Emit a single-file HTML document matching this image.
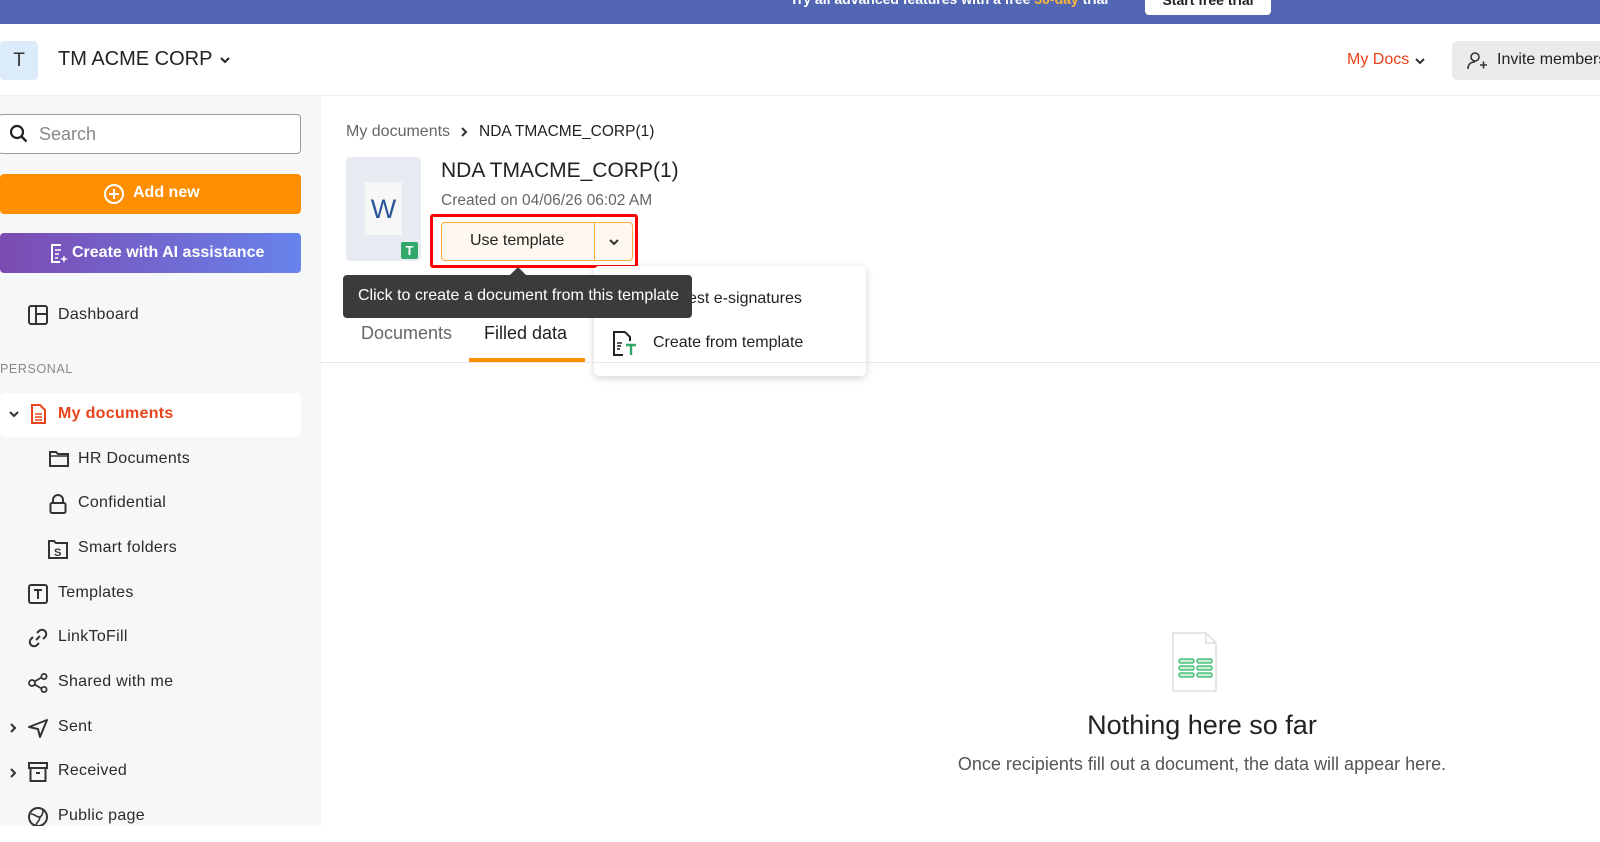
<!DOCTYPE html>
<html><head><meta charset="utf-8"><style>
*{box-sizing:border-box;margin:0;padding:0}
body{width:1600px;height:842px;overflow:hidden;background:#fff;font-family:"Liberation Sans",sans-serif;color:#222;position:relative;white-space:nowrap}
.a{position:absolute}
.banner{left:0;top:0;width:1600px;height:24px;background:#5266b4}
.side{left:0;top:96px;width:321px;height:730px;background:#f6f7f9}
.nav{position:absolute;left:58px;font-size:16px;color:#2a2a2a;letter-spacing:.3px}
svg{overflow:visible}
</style></head><body>
<div class="a banner"></div>
<div class="a" style="left:790px;top:-9px;color:#fff;font-weight:bold;font-size:14px">Try all advanced features with a free <span style="color:#f7b733">30-day</span> trial</div>
<div class="a" style="left:1145px;top:-6px;width:126px;height:21px;background:#fff;border-radius:4px;font-size:14px;font-weight:bold;text-align:center;line-height:12px;color:#222">Start free trial</div>
<!-- header -->
<div class="a" style="left:0;top:41px;width:38px;height:39px;background:#dcebf9;border-radius:4px;font-size:19px;line-height:39px;text-align:center;color:#333">T</div>
<div class="a" style="left:58px;top:48px;font-size:20px;color:#222">TM ACME CORP</div>
<svg class="a" style="left:219px;top:56px" width="12" height="8"><path d="M2 2l4 4 4-4" stroke="#222" stroke-width="2" fill="none"/></svg>
<div class="a" style="left:1347px;top:51px;font-size:16px;color:#e8431a">My Docs</div>
<svg class="a" style="left:1414px;top:57px" width="12" height="8"><path d="M2 2l4 4 4-4" stroke="#333" stroke-width="2" fill="none"/></svg>
<div class="a" style="left:1452px;top:41px;width:160px;height:39px;background:#ebebeb;border-radius:5px"></div>
<svg class="a" style="left:1466px;top:50px" width="22" height="22"><circle cx="9" cy="7" r="4" stroke="#333" stroke-width="1.6" fill="none"/><path d="M2 19c0-5 3-7 7-7M14 15h7M17.5 11.5v7" stroke="#333" stroke-width="1.6" fill="none"/></svg>
<div class="a" style="left:1497px;top:51px;font-size:16px;color:#222">Invite members</div>
<div class="a" style="left:0;top:95px;width:1600px;height:1px;background:#eceef1"></div>
<!-- sidebar -->
<div class="a side"></div>
<div class="a" style="left:-2px;top:114px;width:303px;height:40px;border:1px solid #9a9a9a;border-radius:4px;background:#fff"></div>
<svg class="a" style="left:9px;top:124px" width="20" height="20"><circle cx="8" cy="8" r="6" stroke="#222" stroke-width="2.2" fill="none"/><path d="M12.5 12.5l5 5" stroke="#222" stroke-width="2.4"/></svg>
<div class="a" style="left:39px;top:124px;font-size:18px;color:#888">Search</div>
<div class="a" style="left:0;top:174px;width:301px;height:40px;background:#ff8f00;border-radius:4px"></div>
<svg class="a" style="left:103px;top:183px" width="22" height="22"><circle cx="11" cy="11" r="9" stroke="#fff" stroke-width="2" fill="none"/><path d="M11 6v10M6 11h10" stroke="#fff" stroke-width="2"/></svg>
<div class="a" style="left:133px;top:184px;font-size:16px;color:#fff;font-weight:bold">Add new</div>
<div class="a" style="left:0;top:233px;width:301px;height:40px;border-radius:4px;background:linear-gradient(90deg,#7c4bb1,#6883ec)"></div>
<svg class="a" style="left:47px;top:242px" width="22" height="22"><path d="M14 3H5v17h8" stroke="#fff" stroke-width="2" fill="none"/><path d="M8 8h6M8 12h4M8 16h3" stroke="#fff" stroke-width="1.6"/><path d="M17 13l1 3 3 1-3 1-1 3-1-3-3-1 3-1z" fill="#fff"/></svg>
<div class="a" style="left:72px;top:244px;font-size:16px;color:#fff;font-weight:bold">Create with AI assistance</div>

<svg class="a" style="left:28px;top:305px" width="20" height="20"><rect x="1" y="1" width="18" height="18" rx="2" stroke="#333" stroke-width="2" fill="none"/><path d="M8 1v18M8 9h11" stroke="#333" stroke-width="2"/></svg>
<div class="nav" style="top:306px">Dashboard</div>
<div class="a" style="left:0;top:362px;font-size:12.5px;color:#888;letter-spacing:.6px">PERSONAL</div>
<div class="a" style="left:0;top:393px;width:301px;height:44px;background:#fff;border-radius:5px"></div>
<svg class="a" style="left:8px;top:410px" width="12" height="8"><path d="M2 2l4 4 4-4" stroke="#333" stroke-width="2" fill="none"/></svg>
<svg class="a" style="left:30px;top:404px" width="16" height="20"><path d="M2 1h8l5 5v13H2z" stroke="#e8431a" stroke-width="2" fill="none"/><path d="M5 10h7M5 13h7M5 16h7" stroke="#e8431a" stroke-width="1.4"/></svg>
<div class="nav" style="top:405px;color:#e8431a;font-weight:bold">My documents</div>
<svg class="a" style="left:48px;top:450px" width="22" height="18"><path d="M2 2h6l2 2h10v12H2z" stroke="#333" stroke-width="2" fill="none"/><path d="M2 6h18" stroke="#333" stroke-width="1.5"/></svg>
<div class="nav" style="left:78px;top:450px">HR Documents</div>
<svg class="a" style="left:49px;top:494px" width="18" height="20"><path d="M4 9V6a5 5 0 0110 0v3" stroke="#333" stroke-width="2" fill="none"/><rect x="1.5" y="9" width="15" height="10" rx="1.5" stroke="#333" stroke-width="2" fill="none"/></svg>
<div class="nav" style="left:78px;top:494px">Confidential</div>
<svg class="a" style="left:48px;top:539px" width="20" height="20"><path d="M1 2h5l2 2h11v15H1z" stroke="#333" stroke-width="2" fill="none"/><text x="6" y="17" font-size="11" font-weight="bold" fill="#333" font-family="Liberation Sans">S</text></svg>
<div class="nav" style="left:78px;top:539px">Smart folders</div>
<svg class="a" style="left:28px;top:584px" width="20" height="20"><rect x="1" y="1" width="18" height="18" rx="2" stroke="#333" stroke-width="2" fill="none"/><path d="M6 6h8M10 6v9" stroke="#333" stroke-width="2"/></svg>
<div class="nav" style="top:584px">Templates</div>
<svg class="a" style="left:28px;top:628px" width="20" height="20"><path d="M8 12l4-4M9 5l2-2a4 4 0 016 6l-2 2M11 15l-2 2a4 4 0 01-6-6l2-2" stroke="#333" stroke-width="2" fill="none"/></svg>
<div class="nav" style="top:628px">LinkToFill</div>
<svg class="a" style="left:28px;top:673px" width="20" height="20"><circle cx="4" cy="10" r="3" stroke="#333" stroke-width="1.8" fill="none"/><circle cx="16" cy="3.5" r="2.6" stroke="#333" stroke-width="1.8" fill="none"/><circle cx="16" cy="16.5" r="2.6" stroke="#333" stroke-width="1.8" fill="none"/><path d="M6.5 8.5l7-4M6.5 11.5l7 4" stroke="#333" stroke-width="1.8"/></svg>
<div class="nav" style="top:673px">Shared with me</div>
<svg class="a" style="left:9px;top:722px" width="8" height="12"><path d="M2 2l4 4-4 4" stroke="#333" stroke-width="2" fill="none"/></svg>
<svg class="a" style="left:28px;top:718px" width="20" height="20"><path d="M1 9L19 2l-7 17-2-8z" stroke="#333" stroke-width="2" fill="none" stroke-linejoin="round"/></svg>
<div class="nav" style="top:718px">Sent</div>
<svg class="a" style="left:9px;top:767px" width="8" height="12"><path d="M2 2l4 4-4 4" stroke="#333" stroke-width="2" fill="none"/></svg>
<svg class="a" style="left:28px;top:762px" width="20" height="20"><rect x="1" y="1" width="18" height="5" stroke="#333" stroke-width="2" fill="none"/><path d="M2.5 6v13h15V6M8 11h4" stroke="#333" stroke-width="2" fill="none"/></svg>
<div class="nav" style="top:762px">Received</div>
<svg class="a" style="left:28px;top:807px" width="20" height="20"><circle cx="10" cy="10" r="9" stroke="#333" stroke-width="2" fill="none"/><path d="M3 7c4 0 5 3 8 3s4-4 4-7M8 19c0-4 4-5 4-9" stroke="#333" stroke-width="1.6" fill="none"/></svg>
<div class="nav" style="top:807px">Public page</div>
<div class="a" style="left:0;top:826px;width:321px;height:16px;background:#fff"></div>

<!-- main -->
<div class="a" style="left:346px;top:123px;font-size:16px;color:#666">My documents</div>
<svg class="a" style="left:460px;top:126px" width="8" height="12"><path d="M2 2l4 4-4 4" stroke="#333" stroke-width="2" fill="none"/></svg>
<div class="a" style="left:479px;top:123px;font-size:15.5px;color:#222">NDA TMACME_CORP(1)</div>
<div class="a" style="left:346px;top:157px;width:75px;height:104px;background:#e8ecf2;border-radius:4px"></div>
<div class="a" style="left:365px;top:182px;width:37px;height:53px;background:#f7f7f7;font-size:27px;color:#2b579a;text-align:center;line-height:55px">W</div>
<div class="a" style="left:401px;top:242px;width:17px;height:17px;background:#2fa86a;border-radius:2px;color:#fff;font-size:13px;font-weight:bold;text-align:center;line-height:17px">T</div>
<div class="a" style="left:441px;top:159px;font-size:21px;color:#222">NDA TMACME_CORP(1)</div>
<div class="a" style="left:441px;top:192px;font-size:15.5px;color:#666">Created on 04/06/26 06:02 AM</div>
<div class="a" style="left:430px;top:214px;width:208px;height:54px;border:3px solid #f00;border-radius:3px"></div>
<div class="a" style="left:441px;top:222px;width:192px;height:39px;border:1px solid #ffa940;border-radius:4px;background:#fff8f0"></div>
<div class="a" style="left:594px;top:223px;width:1px;height:37px;background:#ffa940"></div>
<div class="a" style="left:470px;top:232px;font-size:16px;color:#222">Use template</div>
<svg class="a" style="left:608px;top:238px" width="12" height="8"><path d="M2 2l4 4 4-4" stroke="#333" stroke-width="2" fill="none"/></svg>
<!-- dropdown -->
<div class="a" style="left:594px;top:266px;width:272px;height:110px;background:#fff;border-radius:5px;box-shadow:0 2px 8px rgba(0,0,0,.18)"></div>
<div class="a" style="left:688px;top:290px;font-size:16px;color:#222">est e-signatures</div>
<svg class="a" style="left:612px;top:331px" width="26" height="26"><path d="M13 1H2v23h9M13 1l5 5v4" stroke="#222" stroke-width="2" fill="none"/><path d="M5 12h5M5 15h4M5 18h3" stroke="#222" stroke-width="1.4"/><path d="M14 14h10M19 14v10" stroke="#2fa86a" stroke-width="2.4"/></svg>
<div class="a" style="left:653px;top:334px;font-size:16px;color:#222">Create from template</div>
<!-- tooltip -->
<div class="a" style="left:343px;top:275px;width:349px;height:43px;background:#3b3b3b;border-radius:4px"></div>
<div class="a" style="left:510px;top:267px;width:0;height:0;border-left:8px solid transparent;border-right:8px solid transparent;border-bottom:8px solid #3b3b3b"></div>
<div class="a" style="left:358px;top:287px;font-size:16px;color:#fff">Click to create a document from this template</div>
<!-- tabs -->
<div class="a" style="left:361px;top:323px;font-size:18px;color:#666">Documents</div>
<div class="a" style="left:484px;top:323px;font-size:18px;color:#222">Filled data</div>
<div class="a" style="left:469px;top:358px;width:116px;height:4px;background:#ff8f00"></div>
<div class="a" style="left:321px;top:362px;width:1279px;height:1px;background:#e6e6e6"></div>
<!-- empty -->
<svg class="a" style="left:1172px;top:632px" width="46" height="60"><path d="M1 1h33l10 10v48H1z" stroke="#ddd" stroke-width="1.5" fill="#fff"/><path d="M34 1v10h10" stroke="#ddd" stroke-width="1.5" fill="none"/><g fill="#c9efd6" stroke="#2fb866" stroke-width="1.2"><rect x="7" y="27" width="15" height="4" rx="1.5"/><rect x="25" y="27" width="15" height="4" rx="1.5"/><rect x="7" y="34" width="15" height="4" rx="1.5"/><rect x="25" y="34" width="15" height="4" rx="1.5"/><rect x="7" y="41" width="15" height="4" rx="1.5"/><rect x="25" y="41" width="15" height="4" rx="1.5"/></g></svg>
<div class="a" style="left:1000px;top:710px;width:404px;text-align:center;font-size:27px;color:#222">Nothing here so far</div>
<div class="a" style="left:900px;top:754px;width:604px;text-align:center;font-size:18px;color:#555">Once recipients fill out a document, the data will appear here.</div>
</body></html>
